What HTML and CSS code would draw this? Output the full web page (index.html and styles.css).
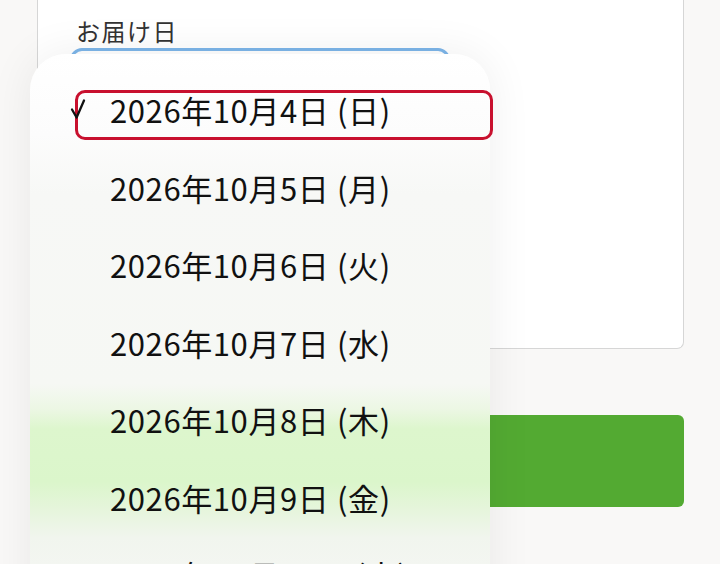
FILE: index.html
```html
<!DOCTYPE html>
<html lang="ja">
<head>
<meta charset="utf-8">
<title>お届け日</title>
<link rel="stylesheet" href="styles.css">
</head>
<body>
<div class="page">
  <section class="card">
    <label class="field-label">お届け日</label>
    <div class="select-box"></div>
  </section>
  <button class="submit" type="button"></button>
</div>

<div class="menu" role="listbox">
  <div class="focus-ring"></div>
  <div class="option selected"><svg class="check" width="16" height="22" viewBox="0 0 16 22"><path d="M2 11.5 L6.6 19.5 L14 2.5" fill="none" stroke="#111" stroke-width="2.3" stroke-linecap="round" stroke-linejoin="round"/></svg>2026年10月4日 (日)</div>
  <div class="option">2026年10月5日 (月)</div>
  <div class="option">2026年10月6日 (火)</div>
  <div class="option">2026年10月7日 (水)</div>
  <div class="option">2026年10月8日 (木)</div>
  <div class="option">2026年10月9日 (金)</div>
  <div class="option">2026年10月10日 (土)</div>
</div>
</body>
</html>
```

FILE: styles.css
```css
* { box-sizing: border-box; }
html, body {
  margin: 0;
  padding: 0;
  height: 100%;
  overflow: hidden;
}
body {
  background: #f9f8f7;
  font-family: "Noto Sans CJK JP", "Noto Sans", sans-serif;
  color: #111;
}
.page {
  display: flex;
  flex-direction: column;
  padding-left: 37px;
  width: 684px;
}
.card {
  height: 349px;
  background: #fff;
  border: 1px solid #d6d6d6;
  border-top: none;
  border-radius: 0 0 7px 7px;
  padding: 15px 0 0 38px;
  display: flex;
  flex-direction: column;
}
.field-label {
  font-size: 24px;
  line-height: 32px;
  color: #333;
  letter-spacing: 1.5px;
}
.select-box {
  margin-top: 1px;
  margin-left: -6px;
  width: 380px;
  height: 120px;
  border: 3px solid #7db5e9;
  border-radius: 12px;
  background: #fff;
}
.submit {
  margin-top: 66px;
  height: 92px;
  border: none;
  border-radius: 6px;
  background: #53aa32;
}
.menu {
  position: absolute;
  left: 30px;
  top: 54px;
  width: 460px;
  height: 600px;
  border-radius: 36px 36px 0 0;
  padding-top: 17px;
  background:
    linear-gradient(180deg,
      #ffffff 0px,
      #fcfcfc 80px,
      #f7f8f6 140px,
      #f6f8f4 330px,
      #ecf7e4 355px,
      #ddf6cd 375px,
      #dbf6cb 428px,
      #e6f5dc 456px,
      #f1f5ee 484px,
      #f4f6f2 520px);
  box-shadow: 0 0 45px rgba(0, 0, 0, 0.07);
  display: flex;
  flex-direction: column;
}
.option {
  position: relative;
  height: 77.5px;
  display: flex;
  align-items: center;
  padding-left: 80px;
  font-size: 31px;
  line-height: 1;
  letter-spacing: 0.6px;
  color: #111;
}
.check {
  position: absolute;
  left: 40px;
  top: 27px;
}
.focus-ring {
  position: absolute;
  left: 45px;
  top: 36px;
  width: 418px;
  height: 50px;
  border: 3.5px solid #c8102e;
  border-radius: 10px;
}
```
